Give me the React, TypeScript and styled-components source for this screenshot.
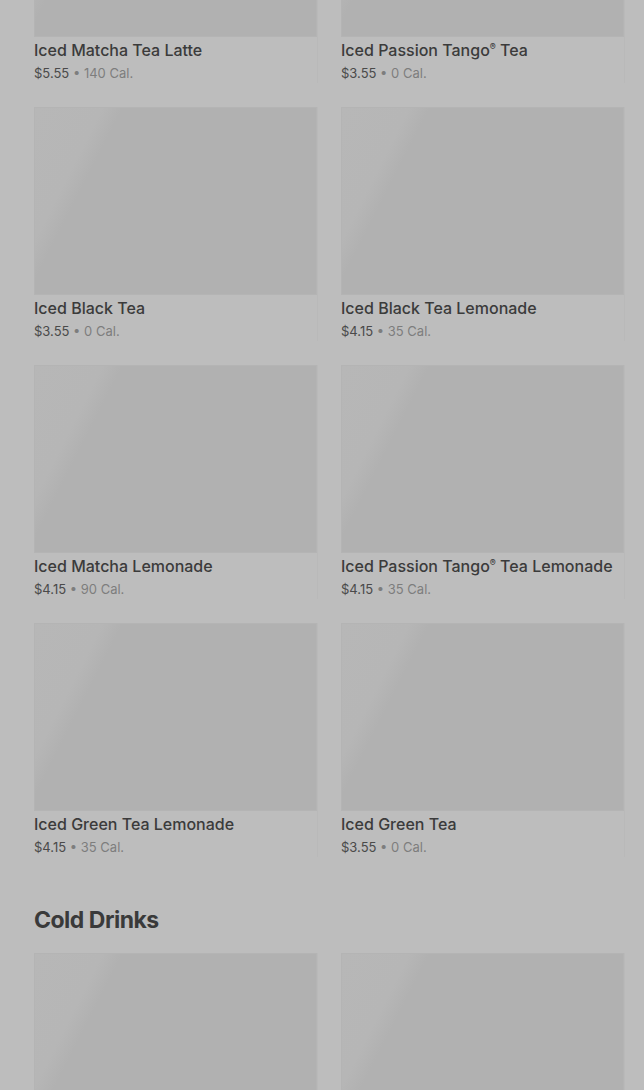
import React from "react";
import styled, { createGlobalStyle } from "styled-components";

const GlobalStyle = createGlobalStyle`
  html, body {
    margin: 0;
    padding: 0;
    background: #bdbdbd;
    overflow: hidden;
  }
  body {
    font-family: Inter, "Noto Sans", "Liberation Sans", sans-serif;
    -webkit-font-smoothing: antialiased;
  }
`;

const Page = styled.main`
  width: 644px;
  height: 1090px;
  overflow: hidden;
  box-sizing: border-box;
  padding: 0 20px 0 34px;
  background: #bdbdbd;
`;

const Scroller = styled.div<{ $offset: number }>`
  margin-top: ${(p) => -p.$offset}px;
`;

const Section = styled.section`
  & + & {
    margin-top: 49px;
  }
`;

const Heading = styled.h2`
  margin: 0 0 19px;
  font-family: Inter, "Noto Sans", sans-serif;
  font-size: 23px;
  line-height: 28px;
  font-weight: 700;
  letter-spacing: -0.5px;
  color: #3a3a3a;
`;

const Grid = styled.div`
  display: grid;
  grid-template-columns: repeat(2, 283px);
  column-gap: 24px;
  row-gap: 24px;
`;

const Card = styled.article`
  display: flex;
  flex-direction: column;
  box-shadow: 1px 0 0 rgba(0, 0, 0, 0.02);
`;

const Thumb = styled.div`
  height: 188px;
  box-sizing: border-box;
  border: 1px solid #b4b4b4;
  background: linear-gradient(
    117deg,
    #b7b7b7 0px,
    #b6b6b6 60px,
    #b1b1b1 78px,
    #b1b1b1 100%
  );
`;

const Info = styled.div`
  padding-top: 1px;
  display: flex;
  flex-direction: column;
  gap: 1px;
`;

const Title = styled.div`
  font-size: 16px;
  line-height: 24px;
  font-weight: 500;
  color: #3b3b3b;
  letter-spacing: 0;

  sup {
    font-size: 9px;
    line-height: 0;
    vertical-align: 6px;
  }
`;

const Meta = styled.div`
  font-size: 13px;
  line-height: 20px;
  font-weight: 400;
  color: #7d7d7d;
  letter-spacing: 0;
`;

const Price = styled.span`
  color: #4a4a4a;
`;

type Item = { name: string; reg?: boolean; rest?: string; price: string; cal: string };

const teas: Item[] = [
  { name: "Iced Matcha Tea Latte", price: "$5.55", cal: "140 Cal." },
  { name: "Iced Passion Tango", reg: true, rest: " Tea", price: "$3.55", cal: "0 Cal." },
  { name: "Iced Black Tea", price: "$3.55", cal: "0 Cal." },
  { name: "Iced Black Tea Lemonade", price: "$4.15", cal: "35 Cal." },
  { name: "Iced Matcha Lemonade", price: "$4.15", cal: "90 Cal." },
  { name: "Iced Passion Tango", reg: true, rest: " Tea Lemonade", price: "$4.15", cal: "35 Cal." },
  { name: "Iced Green Tea Lemonade", price: "$4.15", cal: "35 Cal." },
  { name: "Iced Green Tea", price: "$3.55", cal: "0 Cal." },
];

function ProductCard({ item, showInfo = true }: { item?: Item; showInfo?: boolean }) {
  return (
    <Card>
      <Thumb />
      {showInfo && item && (
        <Info>
          <Title>
            {item.name}
            {item.reg && <sup>®</sup>}
            {item.rest}
          </Title>
          <Meta>
            <Price>{item.price}</Price> • {item.cal}
          </Meta>
        </Info>
      )}
    </Card>
  );
}

export default function App() {
  return (
    <>
      <GlobalStyle />
      <Page>
        <Scroller $offset={151}>
          <Section>
            <Grid>
              {teas.map((t, i) => (
                <ProductCard key={i} item={t} />
              ))}
            </Grid>
          </Section>
          <Section>
            <Heading>Cold Drinks</Heading>
            <Grid>
              <ProductCard showInfo={false} />
              <ProductCard showInfo={false} />
            </Grid>
          </Section>
        </Scroller>
      </Page>
    </>
  );
}
